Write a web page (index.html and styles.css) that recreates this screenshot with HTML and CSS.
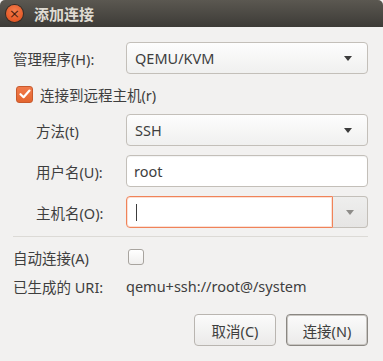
FILE: index.html
```html
<!DOCTYPE html>
<html lang="zh-CN">
<head>
    <meta charset="UTF-8">
    <title>添加连接</title>
    <link rel="stylesheet" href="styles.css">
</head>
<body>
    <div class="window">
        <div class="titlebar">
            <span class="close-btn">&times;</span>
            <span class="title">添加连接</span>
        </div>

        <div class="content">
            <div class="row">
                <span class="label">管理程序(H):</span>
                <div class="combo">
                    <span class="combo-text">QEMU/KVM</span>
                    <span class="arrow"></span>
                </div>
            </div>

            <label class="check-row">
                <span class="checkbox checked">
                    <svg width="12" height="10" viewBox="0 0 12 10"><path d="M1.5 5.2 L4.6 8.2 L10.5 1.6" fill="none" stroke="#fff" stroke-width="2.2" stroke-linecap="round" stroke-linejoin="round"/></svg>
                </span>
                <span>连接到远程主机(r)</span>
            </label>

            <div class="remote">
                <div class="row">
                    <span class="label">方法(t)</span>
                    <div class="combo">
                        <span class="combo-text">SSH</span>
                        <span class="arrow"></span>
                    </div>
                </div>
                <div class="row">
                    <span class="label">用户名(U):</span>
                    <div class="entry">root</div>
                </div>
                <div class="row">
                    <span class="label">主机名(O):</span>
                    <div class="combo-entry">
                        <div class="entry focused"><span class="caret"></span></div>
                        <div class="entry-btn"><span class="arrow grey"></span></div>
                    </div>
                </div>
            </div>

            <div class="separator"></div>

            <div class="row small">
                <span class="label">自动连接(A)</span>
                <span class="checkbox"></span>
            </div>

            <div class="row small uri">
                <span class="label">已生成的 URI:</span>
                <span class="uri-value">qemu+ssh://root@/system</span>
            </div>

            <div class="buttons">
                <button class="btn">取消(C)</button>
                <button class="btn default">连接(N)</button>
            </div>
        </div>
    </div>
</body>
</html>
```

FILE: styles.css
```css
body {
    margin: 0;
    font-family: "Noto Sans", "Noto Sans CJK SC", sans-serif;
    font-size: 14.5px;
    color: #3e3e3e;
}

.window {
    width: 383px;
    height: 361px;
    background-color: #f2f1f0;
    overflow: hidden;
}

.titlebar {
    height: 27px;
    background: linear-gradient(#5b5851, #3d3b37);
    border-radius: 5px 5px 0 0;
    display: flex;
    align-items: center;
    padding-left: 6px;
}

.close-btn {
    width: 17px;
    height: 17px;
    border-radius: 50%;
    background: radial-gradient(circle at 50% 35%, #f47e4e, #df4a17);
    box-shadow: 0 0 0 1px #3a2a22;
    color: #4a1d0c;
    font-size: 13px;
    line-height: 17px;
    text-align: center;
    font-family: "DejaVu Sans", sans-serif;
}

.title {
    margin-left: 11px;
    color: #dfdbd2;
    font-weight: bold;
    font-size: 15px;
    font-family: "Noto Sans CJK SC", sans-serif;
}

.content {
    padding: 15px 15px 0 13px;
    display: flex;
    flex-direction: column;
}

.row {
    display: flex;
    align-items: center;
    height: 32px;
}

.label {
    width: 113px;
    flex-shrink: 0;
}

.combo {
    flex: 1;
    height: 30px;
    border: 1px solid #c3bfb9;
    border-radius: 4px;
    background: linear-gradient(#fdfdfd, #f0f0ef);
    display: flex;
    align-items: center;
    padding: 0 15px 0 8px;
}

.combo-text {
    flex: 1;
}

.arrow {
    width: 0;
    height: 0;
    border-left: 4px solid transparent;
    border-right: 4px solid transparent;
    border-top: 5px solid #3c3c3c;
}

.arrow.grey {
    border-top-color: #8e8c89;
}

.check-row {
    display: flex;
    align-items: center;
    height: 20px;
    margin-top: 10px;
    padding-left: 3px;
    gap: 7px;
}

.checkbox {
    width: 14px;
    height: 14px;
    border: 1px solid #a8a49f;
    border-radius: 3px;
    background: linear-gradient(#ffffff, #f0efee);
    display: flex;
    align-items: center;
    justify-content: center;
}

.checkbox.checked {
    width: 15px;
    height: 15px;
    border-color: #c85a2d;
    background: linear-gradient(#f17b4b, #e4652f);
}

.remote {
    margin-top: 10px;
    padding-left: 23px;
    display: flex;
    flex-direction: column;
    gap: 9px;
}

.remote .label {
    width: 90px;
}

.entry {
    flex: 1;
    border: 1px solid #c3bfb9;
    border-radius: 4px;
    background-color: #fff;
    box-shadow: inset 0 1px 1px rgba(0, 0, 0, 0.05);
    display: flex;
    align-items: center;
    padding-left: 7px;
    box-sizing: border-box;
    height: 32px;
}

.combo-entry {
    flex: 1;
    display: flex;
    height: 32px;
}

.entry.focused {
    border: 1px solid #f08359;
    box-shadow: inset 0 0 0 1px rgba(240, 131, 89, 0.25);
    border-radius: 4px 0 0 4px;
    padding-left: 9px;
}

.caret {
    width: 1px;
    height: 17px;
    background-color: #3c3c3c;
}

.entry-btn {
    width: 34px;
    border: 1px solid #c3bfb9;
    border-left: none;
    border-radius: 0 4px 4px 0;
    background: linear-gradient(#eeeeed, #e6e5e4);
    display: flex;
    align-items: center;
    justify-content: center;
}

.separator {
    margin-top: 8px;
    height: 1px;
    background-color: #dcdad6;
}

.row.small {
    height: 20px;
    margin-top: 10px;
}

.row.small .checkbox {
    margin-left: 2px;
}

.row.uri {
    margin-top: 9px;
}

.buttons {
    margin-top: 18px;
    display: flex;
    justify-content: flex-end;
    gap: 10px;
}

.btn {
    width: 82px;
    height: 32px;
    font-family: inherit;
    font-size: 14.5px;
    color: #3e3e3e;
    border: 1px solid #b9b5b0;
    border-radius: 4px;
    background: linear-gradient(#fbfbfb, #ebeae9);
    padding: 0;
}

.btn.default {
    border-color: #8a8782;
    box-shadow: inset 0 0 0 1px #c9c6c2;
}
```
